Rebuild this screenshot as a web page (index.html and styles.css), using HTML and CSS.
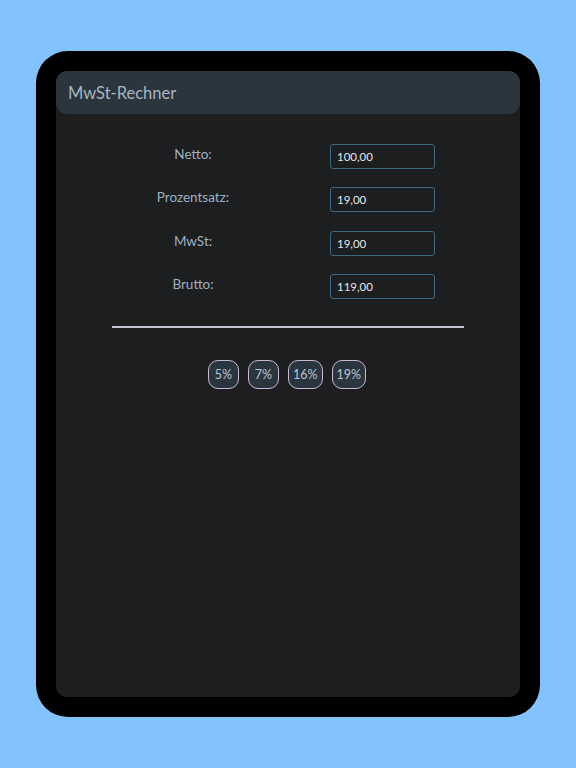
FILE: index.html
```html
<!DOCTYPE html>
<html lang="de">
<head>
<meta charset="utf-8">
<link rel="stylesheet" href="styles.css">
</head>
<body>
<div class="device">
  <div class="screen">
    <header class="topbar">MwSt-Rechner</header>
    <main class="content">
      <div class="form">
        <label class="lbl">Netto:</label><div class="field">100,00</div>
        <label class="lbl">Prozentsatz:</label><div class="field">19,00</div>
        <label class="lbl">MwSt:</label><div class="field">19,00</div>
        <label class="lbl">Brutto:</label><div class="field">119,00</div>
      </div>
      <hr class="divider">
      <div class="chips">
        <button class="chip">5%</button>
        <button class="chip">7%</button>
        <button class="chip">16%</button>
        <button class="chip">19%</button>
      </div>
    </main>
  </div>
</div>
</body>
</html>
```
FILE: styles.css
```css
html, body { margin: 0; padding: 0; }
body {
  width: 576px; height: 768px;
  background: #82c3fe;
  font-family: Lato, "Noto Sans", sans-serif;
  overflow: hidden;
}
.device {
  margin: 51px 0 0 36px;
  width: 504px; height: 666px;
  box-sizing: border-box;
  background: #000;
  border-radius: 32px;
  padding: 20px;
}
.screen {
  height: 100%;
  background: #1d1e20;
  border-radius: 11px;
  overflow: hidden;
  display: flex; flex-direction: column;
}
.topbar {
  height: 43px;
  background: #2b353d;
  border-radius: 11px;
  color: #a7b4c2;
  font-size: 16.5px;
  display: flex; align-items: center;
  padding-left: 12px;
}
.content { padding: 0 56px; }
.form {
  display: grid;
  grid-template-columns: 162px 1fr;
  row-gap: 18.3px;
  padding-top: 30px;
  align-items: center;
}
.lbl {
  text-align: center;
  color: #9eb0c2;
  font-size: 13.5px;
  margin-top: -5px;
}
.field {
  margin-left: 56px;
  width: 105px; height: 25px;
  box-sizing: border-box;
  border: 1.5px solid #3e6780;
  border-radius: 3px;
  color: #e4e8ec;
  font-size: 11.5px;
  display: flex; align-items: center;
  padding-left: 6px;
}
.divider {
  margin: 27px 0 0;
  border: 0;
  height: 2px;
  background: #c9c3cf;
}
.chips {
  display: flex; justify-content: center;
  gap: 9px;
  margin-top: 32px;
  padding-right: 2px;
}
.chip {
  height: 29px;
  padding: 0 4px;
  min-width: 31px;
  background: #2b353d;
  border: 1.5px solid #cbb9d8;
  border-radius: 10px;
  color: #b6c6d6;
  font-family: Lato, "Noto Sans", sans-serif;
  font-size: 12.5px;
}
```
